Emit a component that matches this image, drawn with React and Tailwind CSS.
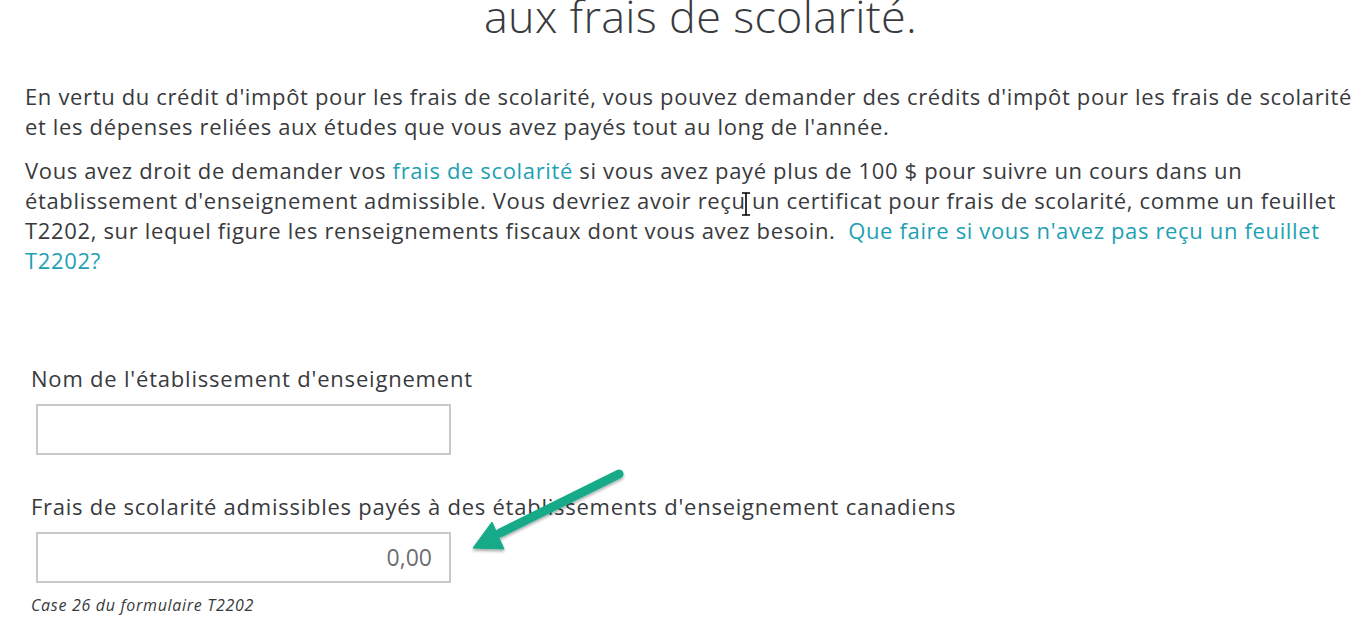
import React from "react";

export default function App() {
  const font = { fontFamily: "'Open Sans', Lato, sans-serif" };
  const link = "text-[#1d9fb4]";
  return (
    <div className="relative w-[1365px] h-[634px] overflow-hidden bg-white text-[#393a3d]" style={font}>
      <h1 className="mt-[-12px] pl-[36px] text-center text-[45px] leading-[56px] font-light tracking-[0.3px] text-[#393a3d]">
        aux frais de scolarité.
      </h1>
      <div className="mt-[37px] pl-[25px] text-[22px] leading-[30px] tracking-[0.65px] whitespace-nowrap">
        <div>En vertu du crédit d'impôt pour les frais de scolarité, vous pouvez demander des crédits d'impôt pour les frais de scolarité</div>
        <div>et les dépenses reliées aux études que vous avez payés tout au long de l'année.</div>
        <div className="mt-[14px]">
          Vous avez droit de demander vos <span className={link}>frais de scolarité</span> si vous avez payé plus de 100 $ pour suivre un cours dans un
        </div>
        <div>établissement d'enseignement admissible. Vous devriez avoir reçu un certificat pour frais de scolarité, comme un feuillet</div>
        <div>
          T2202, sur lequel figure les renseignements fiscaux dont vous avez besoin.&nbsp;{" "}
          <span className={link}>Que faire si vous n'avez pas reçu un feuillet</span>
        </div>
        <div className={link}>T2202?</div>
      </div>

      <div className="mt-[88px] pl-[31px]">
        <div className="text-[22px] leading-[30px] tracking-[0.8px]">Nom de l'établissement d'enseignement</div>
        <div className="mt-[11px] ml-[5px] w-[415px] h-[51px] border-2 border-[#c9c9c9] bg-white"></div>

        <div className="mt-[36px] text-[22px] leading-[30px] tracking-[0.75px]">
          Frais de scolarité admissibles payés à des établissements d'enseignement canadiens
        </div>
        <div className="mt-[11px] ml-[5px] w-[415px] h-[51px] border-2 border-[#c9c9c9] bg-white flex items-center justify-end pr-[17px] text-[23px] text-[#6d6e70]">
          0,00
        </div>
        <div className="mt-[10px] text-[16px] italic tracking-[0.7px] text-[#393a3d]">Case 26 du formulaire T2202</div>
      </div>

      <svg className="absolute left-[460px] top-[460px]" width="180" height="110" viewBox="0 0 180 110">
        <defs>
          <filter id="sh" x="-20%" y="-20%" width="140%" height="140%">
            <feDropShadow dx="0" dy="2" stdDeviation="1.5" floodColor="#000" floodOpacity="0.35" />
          </filter>
        </defs>
        <g filter="url(#sh)" fill="#17aa89" stroke="#17aa89">
          <line x1="159" y1="14" x2="40" y2="73" strokeWidth="9" strokeLinecap="round" />
          <polygon points="13,88 32,62 44,89" strokeWidth="1" strokeLinejoin="round" />
        </g>
      </svg>

      <svg className="absolute left-[740px] top-[192px]" width="12" height="24" viewBox="0 0 12 24">
        <path d="M2 1h8M6 1v22M2 23h8" stroke="#000" strokeWidth="1.6" fill="none" />
      </svg>
    </div>
  );
}
